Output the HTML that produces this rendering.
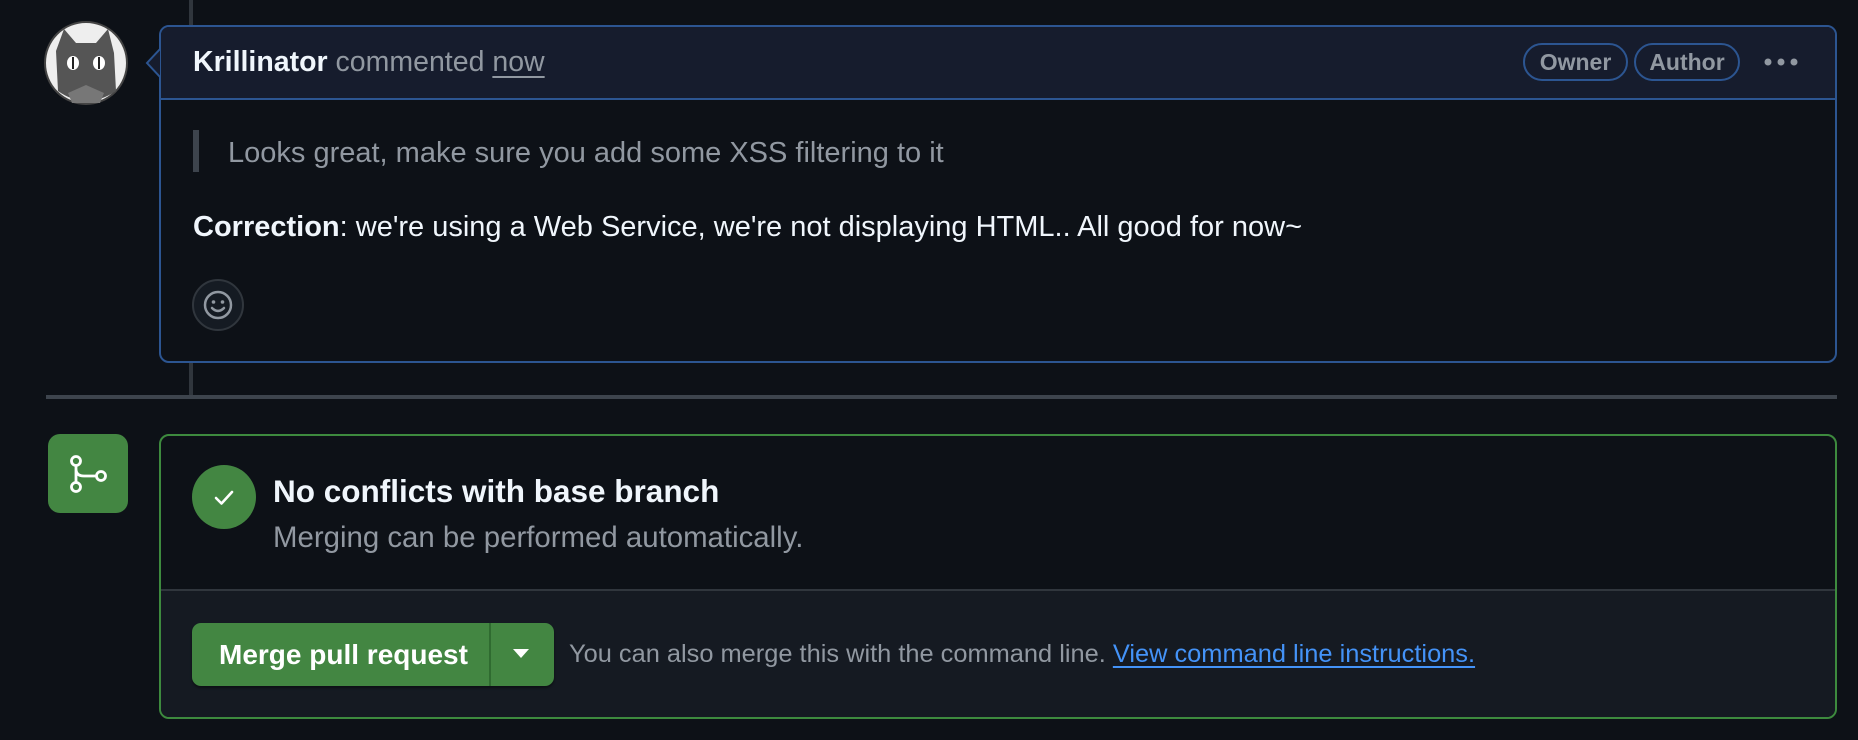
<!DOCTYPE html>
<html><head><meta charset="utf-8"><style>
*{margin:0;padding:0;box-sizing:border-box}
body{width:1858px;height:740px;background:#0d1117;font-family:"Liberation Sans",Arial,sans-serif;position:relative;overflow:hidden;color:#f0f6fc}
.a{position:absolute}
.t{white-space:nowrap}
</style></head><body>
<div class="a" style="left:189px;top:0;width:4px;height:398px;background:#30363d"></div>
<div class="a" style="left:46px;top:395px;width:1791px;height:4px;background:#3d444d"></div>

<!-- avatar -->
<svg class="a" style="left:44px;top:21px" width="84" height="84" viewBox="0 0 84 84">
<circle cx="42" cy="42" r="41" fill="#eee" stroke="#444" stroke-width="2"/>
<path d="M14 70 L12 30 L20 8 L32 22 L52 22 L64 8 L70 32 L72 70 Q42 90 14 70Z" fill="#555"/>
<ellipse cx="29" cy="42" rx="6" ry="7" fill="#fff"/><ellipse cx="55" cy="42" rx="6" ry="7" fill="#fff"/>
<rect x="28" y="36" width="2" height="12" fill="#222"/><rect x="54" y="36" width="2" height="12" fill="#222"/>
<path d="M24 72 L42 64 L60 72 L56 82 L28 82Z" fill="#777"/>
</svg>

<!-- comment box -->
<div class="a" style="left:159px;top:25px;width:1678px;height:338px;border:2px solid #2c5591;border-radius:10px;overflow:hidden;background:#0d1117">
 <div style="height:73px;background:#161c2d;border-bottom:2px solid #2c5591"></div>
</div>
<svg class="a" style="left:145px;top:48px" width="18" height="30"><path d="M16 0 L2 15 L16 30Z" fill="#161c2d" stroke="#2c5591" stroke-width="2"/><rect x="16" y="0" width="3" height="30" fill="#161c2d"/></svg>
<div class="a t" style="left:193px;top:46px;font-size:28.5px;color:#9198a1"><b style="color:#f0f6fc">Krillinator</b> commented <span style="text-decoration:underline;text-underline-offset:5px">now</span></div>
<div class="a t" style="left:1523px;top:43px;width:105px;height:38px;border:2px solid #2c5591;border-radius:20px;color:#9198a1;font-size:23px;font-weight:bold;text-align:center;line-height:34px">Owner</div>
<div class="a t" style="left:1634px;top:43px;width:106px;height:38px;border:2px solid #2c5591;border-radius:20px;color:#9198a1;font-size:23px;font-weight:bold;text-align:center;line-height:34px">Author</div>
<svg class="a" style="left:1763px;top:57px" width="36" height="10"><circle cx="5" cy="5" r="3.5" fill="#9198a1"/><circle cx="18" cy="5" r="3.5" fill="#9198a1"/><circle cx="31" cy="5" r="3.5" fill="#9198a1"/></svg>

<div class="a" style="left:193px;top:130px;width:6px;height:42px;background:#3d444d"></div>
<div class="a t" style="left:228px;top:137px;font-size:29px;color:#9198a1">Looks great, make sure you add some XSS filtering to it</div>
<div class="a t" style="left:193px;top:211px;font-size:29px;color:#f0f6fc"><b>Correction</b>: we're using a Web Service, we're not displaying HTML.. All good for now~</div>
<div class="a" style="left:192px;top:279px;width:52px;height:52px;border:2px solid #30363d;border-radius:50%;background:#151b23"></div>
<svg class="a" style="left:202px;top:289px" width="32" height="32" viewBox="0 0 32 32"><circle cx="16" cy="16" r="13" fill="none" stroke="#9198a1" stroke-width="2.5"/><circle cx="11.5" cy="13" r="1.8" fill="#9198a1"/><circle cx="20.5" cy="13" r="1.8" fill="#9198a1"/><path d="M10 19 Q16 25 22 19" fill="none" stroke="#9198a1" stroke-width="2.5" stroke-linecap="round"/></svg>

<!-- merge icon -->
<div class="a" style="left:48px;top:434px;width:80px;height:79px;background:#438642;border-radius:12px"></div>
<svg class="a" style="left:64px;top:450px" width="48" height="48" viewBox="0 0 48 48" fill="none" stroke="#fff" stroke-width="2.8"><circle cx="12" cy="11" r="4.5"/><circle cx="12" cy="37" r="4.5"/><circle cx="37" cy="26" r="4.5"/><path d="M12 15.5 V32.5 M12 19 Q12 26 20 26 H32.5"/></svg>

<!-- merge box -->
<div class="a" style="left:159px;top:434px;width:1678px;height:285px;border:2px solid #3d8a3e;border-radius:10px;overflow:hidden;background:#0d1117">
 <div style="position:absolute;left:0;right:0;top:153px;bottom:0;background:#151a22;border-top:2px solid #30363d"></div>
</div>
<div class="a" style="left:192px;top:465px;width:64px;height:64px;border-radius:50%;background:#438642"></div>
<svg class="a" style="left:208px;top:481px" width="32" height="32" viewBox="0 0 32 32"><path d="M8 17 L13.5 22.5 L24 11" fill="none" stroke="#fff" stroke-width="2.6" stroke-linecap="round" stroke-linejoin="round"/></svg>
<div class="a t" style="left:273px;top:473px;font-size:31.5px;font-weight:bold;color:#f0f6fc">No conflicts with base branch</div>
<div class="a t" style="left:273px;top:521px;font-size:29.4px;color:#9198a1">Merging can be performed automatically.</div>

<div class="a" style="left:192px;top:623px;width:362px;height:63px;background:#438642;border-radius:9px;box-shadow:0 2px 2px rgba(0,0,0,.4)"></div>
<div class="a" style="left:489px;top:623px;width:2px;height:63px;background:#2f6b30"></div>
<div class="a t" style="left:219px;top:639px;font-size:28px;font-weight:bold;color:#fff">Merge pull request</div>
<svg class="a" style="left:513px;top:649px" width="16" height="10"><path d="M0 0 H16 L8 9Z" fill="#fff"/></svg>
<div class="a t" style="left:569px;top:640px;font-size:25.4px;color:#9198a1">You can also merge this with the command line. <span style="color:#4493f8;text-decoration:underline;text-underline-offset:4px">View command line instructions.</span></div>
</body></html>
